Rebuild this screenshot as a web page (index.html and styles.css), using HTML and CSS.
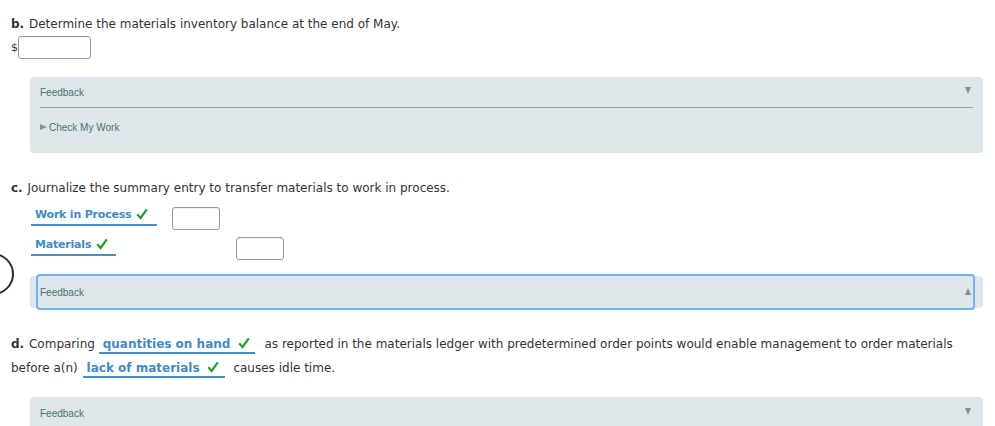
FILE: index.html
```html
<!DOCTYPE html>
<html>
<head>
<meta charset="utf-8">
<link rel="stylesheet" href="styles.css">
</head>
<body>
<div class="page">
  <section class="part part-b">
    <p class="q"><b>b.</b> Determine the materials inventory balance at the end of May.</p>
    <div class="money"><span class="cur">$</span><span class="input wide"></span></div>
    <div class="feedback fb1">
      <div class="fb-head"><span>Feedback</span><span class="tri down"></span></div>
      <div class="fb-body"><span class="tri right"></span>Check My Work</div>
    </div>
  </section>

  <section class="part part-c">
    <p class="q"><b>c.</b> Journalize the summary entry to transfer materials to work in process.</p>
    <div class="jrow r1">
      <span class="sel acct1">Work in Process <svg class="chk" viewBox="0 0 12 12"><path d="M1.2 6.2 L4.6 10 L10.8 1.4"/></svg></span>
      <span class="input small"></span>
    </div>
    <div class="jrow r2">
      <span class="sel acct2">Materials <svg class="chk" viewBox="0 0 12 12"><path d="M1.2 6.2 L4.6 10 L10.8 1.4"/></svg></span>
      <span class="input small cr"></span>
    </div>
    <div class="feedback fb2">
      <div class="fb-head focused"><span>Feedback</span><span class="tri up"></span></div>
    </div>
  </section>

  <section class="part part-d">
    <p class="q dq"><b>d.</b> <span>Comparing</span> <span class="ins s1">quantities on hand <svg class="chk" viewBox="0 0 12 12"><path d="M1.2 6.2 L4.6 10 L10.8 1.4"/></svg></span> <span>as reported in the materials ledger with predetermined order points would enable management to order materials</span> <span>before a(n)</span> <span class="ins s2">lack of materials <svg class="chk" viewBox="0 0 12 12"><path d="M1.2 6.2 L4.6 10 L10.8 1.4"/></svg></span> <span>causes idle time.</span></p>
    <div class="feedback fb3">
      <div class="fb-head"><span>Feedback</span><span class="tri down"></span></div>
    </div>
  </section>
</div>
<div class="ring"></div>
</body>
</html>
```
FILE: styles.css
```css
html, body {
  margin: 0;
  padding: 0;
  background: #fff;
  overflow: hidden;
}
body {
  width: 995px;
  height: 426px;
  position: relative;
  font-family: "DejaVu Sans", Verdana, sans-serif;
  font-size: 12px;
  color: #333;
}
.page {
  padding: 16px 0 0 11px;
}
.q {
  margin: 0;
  line-height: 16px;
}
.q b {
  font-weight: bold;
  margin-right: 1px;
}
.money {
  display: flex;
  align-items: center;
  margin-top: 4px;
  height: 23px;
}
.cur {
  width: 7px;
  font-size: 11px;
}
.input {
  display: inline-block;
  box-sizing: border-box;
  border: 1px solid #9a9a9a;
  border-radius: 3px;
  background: #fff;
  box-shadow: inset 0 1px 1px rgba(0,0,0,0.06);
}
.input.wide {
  width: 73px;
  height: 23px;
}
.input.small {
  width: 48px;
  height: 23px;
}
.feedback {
  background: #dfe6e9;
  border-radius: 4px;
  margin-left: 19px;
  width: 953px;
  box-sizing: border-box;
  font-family: "Liberation Sans", Arial, sans-serif;
  font-size: 10px;
  color: #4d7373;
}
.fb1 {
  margin-top: 18px;
  height: 76px;
  padding: 0 10px;
}
.fb-head {
  display: flex;
  justify-content: space-between;
  align-items: center;
  height: 31px;
  padding-top: 1px;
  box-sizing: border-box;
}
.fb1 .fb-head {
  border-bottom: 1px solid #9aa2a4;
}
.fb-body {
  display: flex;
  align-items: center;
  height: 38px;
}
.tri {
  display: inline-block;
  width: 0;
  height: 0;
}
.tri.down {
  border-left: 3.5px solid transparent;
  border-right: 3.5px solid transparent;
  border-top: 7px solid #8a8f90;
  margin-right: 2px;
  margin-top: -4px;
}
.tri.up {
  border-left: 3.5px solid transparent;
  border-right: 3.5px solid transparent;
  border-bottom: 7px solid #8a8f90;
  margin-right: 2px;
  margin-top: -2px;
}
.tri.right {
  border-top: 3.5px solid transparent;
  border-bottom: 3.5px solid transparent;
  border-left: 7px solid #8a8f90;
  margin-right: 2px;
}
.part-c {
  margin-top: 27px;
}
.jrow {
  display: flex;
  align-items: center;
  height: 24px;
}
.r1 {
  margin-top: 10px;
  margin-left: 20px;
}
.r2 {
  margin-top: 6px;
  margin-left: 20px;
}
.sel {
  display: inline-flex;
  align-items: center;
  box-sizing: border-box;
  color: #3f8bc9;
  font-weight: bold;
  border-bottom: 2px solid #4a8fc7;
  padding: 0 4px 0 4px;
}
.acct1, .acct2 {
  font-size: 11px;
  letter-spacing: -0.2px;
}
.acct1 {
  width: 126px;
  height: 22px;
  margin-top: -6px;
  margin-right: 15px;
}
.acct2 {
  width: 85px;
  height: 22px;
  margin-top: -6px;
  margin-right: 120px;
}
.chk {
  width: 12px;
  height: 12px;
  margin-left: 5px;
}
.chk path {
  fill: none;
  stroke: #1ea22e;
  stroke-width: 2.2;
  stroke-linecap: butt;
}
.fb2 {
  margin-top: 16px;
  height: 32px;
  padding: 0 10px 0 8px;
}
.fb2 .fb-head {
  height: 32px;
  padding-left: 2px;
  padding-right: 0;
}
.focused {
  outline: 2.5px solid #6fb0f7;
  outline-offset: 0;
  border-radius: 2px;
}
.part-d {
  margin-top: 24px;
}
.dq {
  line-height: 24px;
  width: 965px;
}
.ins {
  display: inline-block;
  box-sizing: border-box;
  color: #3f8bc9;
  font-weight: bold;
  line-height: 15px;
  padding: 0 4px;
  border-bottom: 2px solid #4a8fc7;
  white-space: nowrap;
}
.ins .chk {
  vertical-align: -1px;
  margin-left: 3px;
}
.s1 {
  width: 156px;
  margin: 0 6px 0 0;
}
.s2 {
  width: 142px;
  margin: 0 5px 0 1px;
}
.fb3 {
  margin-top: 17px;
  height: 40px;
  padding: 0 10px;
}
.fb3 .fb-head {
  height: 31px;
}
.ring {
  position: absolute;
  left: -28px;
  top: 253px;
  width: 38px;
  height: 38px;
  border: 2.5px solid #2e2e2e;
  border-radius: 50%;
}
```
